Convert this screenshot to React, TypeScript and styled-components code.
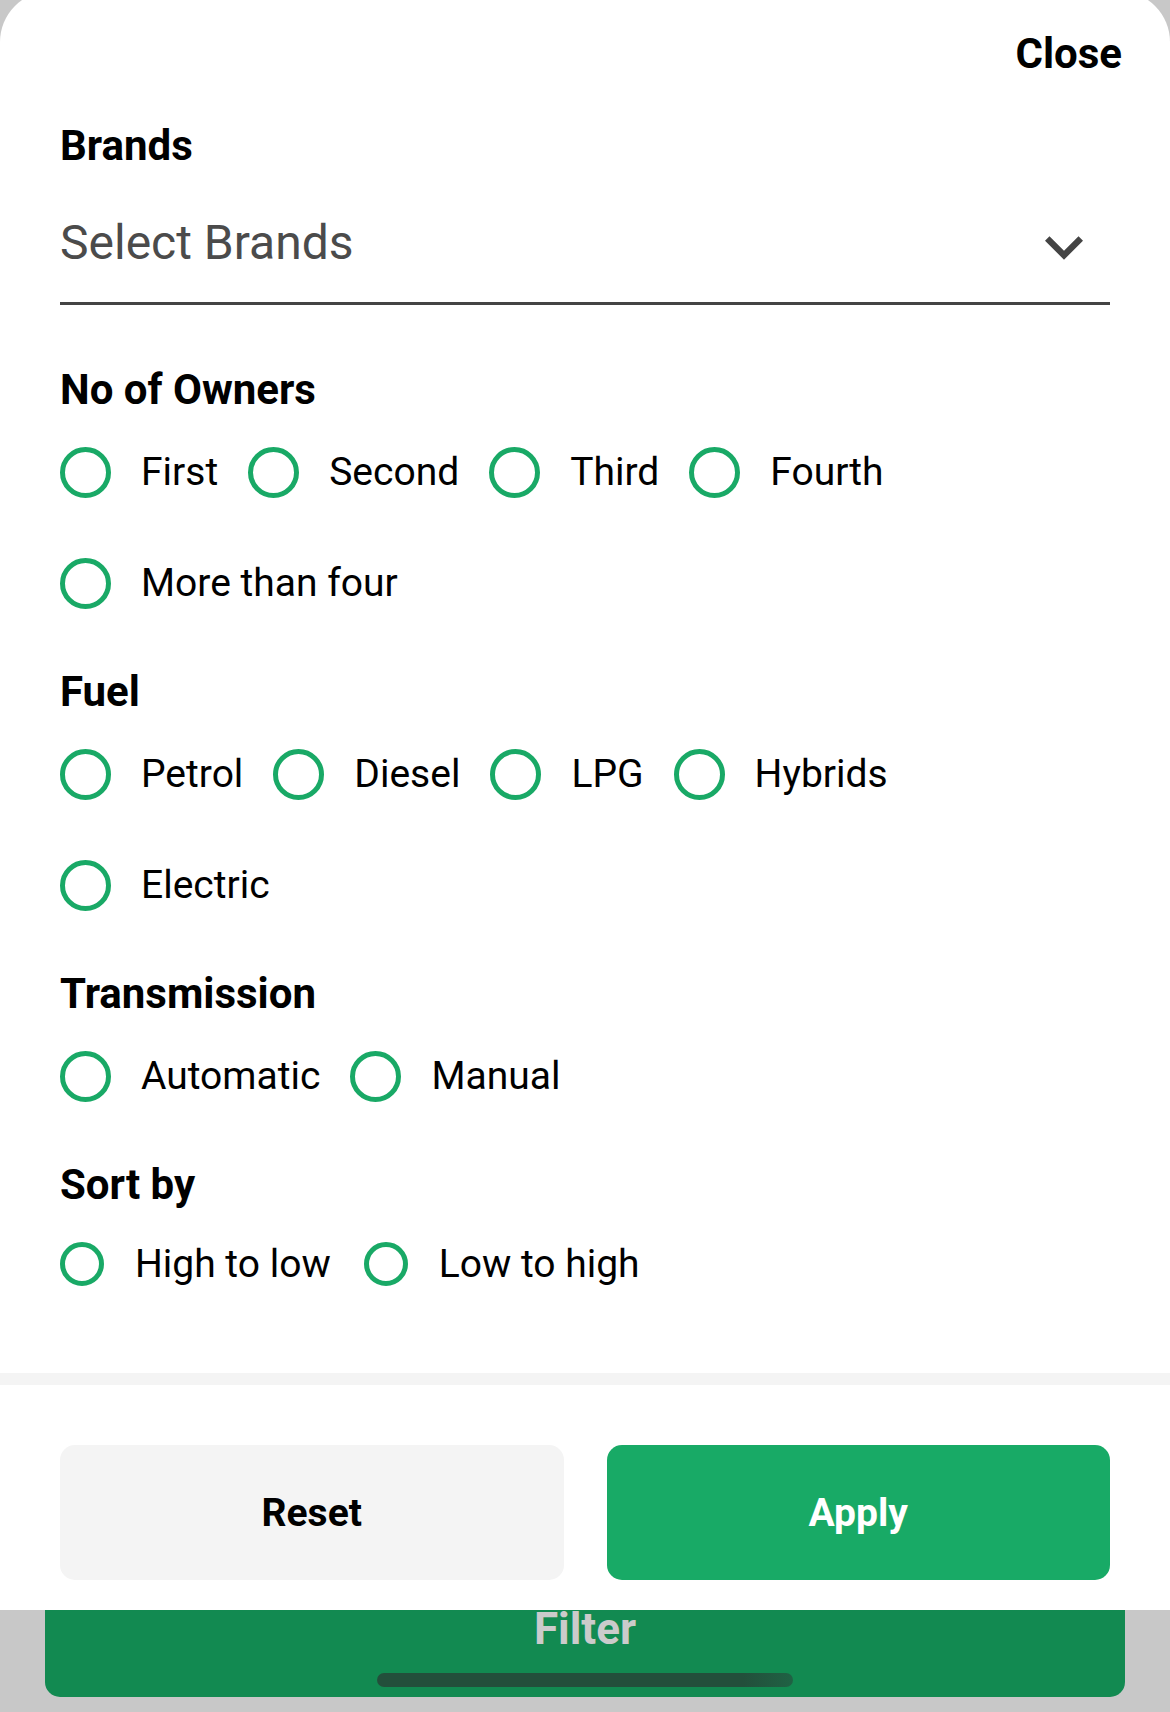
import styled, { createGlobalStyle } from "styled-components";

const GlobalStyle = createGlobalStyle`
  html, body {
    margin: 0;
    padding: 0;
    background: #c8c8c8;
    font-family: Roboto, "Noto Sans", "Liberation Sans", sans-serif;
    -webkit-font-smoothing: antialiased;
  }
  * { box-sizing: border-box; }
`;

const green = "#19a966";

const Screen = styled.div`
  width: 1170px;
  height: 1712px;
  overflow: hidden;
  display: flex;
  flex-direction: column;
  background: #c8c8c8;
`;

const Sheet = styled.div`
  margin-top: -9px;
  height: 1619px;
  flex-shrink: 0;
  background: #fff;
  border-radius: 51px 51px 0 0;
  display: flex;
  flex-direction: column;
`;

const Header = styled.div`
  display: flex;
  justify-content: flex-end;
  padding: 35px 48px 0 60px;
`;

const CloseButton = styled.button`
  border: none;
  background: none;
  padding: 0;
  font-family: inherit;
  font-weight: 700;
  font-size: 42px;
  line-height: 56px;
  color: #000;
`;

const Content = styled.div`
  flex: 1;
  padding: 36px 60px 0;
`;

const Section = styled.section<{ $gap?: number }>`
  margin-top: ${(p) => p.$gap ?? 42}px;
  &:first-child { margin-top: 0; }
`;

const Heading = styled.h2`
  margin: 0;
  font-size: 42px;
  font-weight: 700;
  line-height: 56px;
  color: #000;
`;

const SelectField = styled.div`
  margin-top: 37px;
  display: flex;
  align-items: center;
  justify-content: space-between;
  padding: 0 27px 27px 0;
  border-bottom: 3px solid #444;
`;

const Placeholder = styled.span`
  font-size: 48px;
  line-height: 64px;
  color: #4b4b4b;
`;

const Chevron = styled.svg`
  width: 38px;
  height: 24px;
  margin-top: 10px;
`;

const RadioGroup = styled.div<{ $gap?: number; $top?: number }>`
  margin-top: ${(p) => p.$top ?? 14}px;
  display: flex;
  flex-wrap: wrap;
  column-gap: ${(p) => p.$gap ?? 30}px;
  row-gap: 31px;
`;

const RadioItem = styled.label`
  display: flex;
  align-items: center;
  height: 80px;
  cursor: pointer;
`;

const Ring = styled.span<{ $size: number }>`
  width: ${(p) => p.$size}px;
  height: ${(p) => p.$size}px;
  border: 5px solid ${green};
  border-radius: 50%;
  flex-shrink: 0;
`;

const RadioText = styled.span<{ $gap: number }>`
  margin-left: ${(p) => p.$gap}px;
  font-size: 39px;
  color: #000;
  line-height: 48px;
`;

const Divider = styled.div`
  height: 12px;
  background: #f4f4f4;
`;

const Footer = styled.div`
  display: grid;
  grid-template-columns: 1fr 1fr;
  column-gap: 43px;
  padding: 60px 60px 30px;
`;

const ActionButton = styled.button<{ $primary?: boolean }>`
  height: 135px;
  border: none;
  border-radius: 15px;
  font-family: inherit;
  font-size: 39px;
  font-weight: 700;
  background: ${(p) => (p.$primary ? "#18aa66" : "#f4f4f4")};
  color: ${(p) => (p.$primary ? "#fff" : "#000")};
`;

const FilterBar = styled.div`
  margin: 0 45px;
  height: 87px;
  flex-shrink: 0;
  background: #128a51;
  border-radius: 0 0 15px 15px;
  display: flex;
  flex-direction: column;
  align-items: center;
`;

const FilterText = styled.span`
  font-size: 44px;
  font-weight: 700;
  line-height: 38px;
  color: #cbcbcb;
`;

const HomeHandle = styled.div`
  margin-top: 25px;
  width: 416px;
  height: 14px;
  border-radius: 7px;
  background: linear-gradient(90deg, #234f3b 0%, #234f3b 88%, #1f6244 100%);
`;

type RadioProps = { label: string; size?: number; textGap?: number };

const Radio = ({ label, size = 51, textGap = 30 }: RadioProps) => (
  <RadioItem>
    <Ring $size={size} />
    <RadioText $gap={textGap}>{label}</RadioText>
  </RadioItem>
);

const groups: { title: string; options: string[] }[] = [
  { title: "No of Owners", options: ["First", "Second", "Third", "Fourth", "More than four"] },
  { title: "Fuel", options: ["Petrol", "Diesel", "LPG", "Hybrids", "Electric"] },
  { title: "Transmission", options: ["Automatic", "Manual"] },
];

export default function App() {
  return (
    <>
      <GlobalStyle />
      <Screen>
        <Sheet>
          <Header>
            <CloseButton>Close</CloseButton>
          </Header>
          <Content>
            <Section>
              <Heading>Brands</Heading>
              <SelectField>
                <Placeholder>Select Brands</Placeholder>
                <Chevron viewBox="6 8.59 12 7.41">
                  <path d="M16.59 8.59L12 13.17 7.41 8.59 6 10l6 6 6-6z" fill="#444" />
                </Chevron>
              </SelectField>
            </Section>
            {groups.map((g, i) => (
              <Section key={g.title} $gap={i === 0 ? 57 : 41}>
                <Heading>{g.title}</Heading>
                <RadioGroup>
                  {g.options.map((o) => (
                    <Radio key={o} label={o} />
                  ))}
                </RadioGroup>
              </Section>
            ))}
            <Section $gap={41}>
              <Heading>Sort by</Heading>
              <RadioGroup $gap={33} $top={11}>
                <Radio label="High to low" size={44} textGap={31} />
                <Radio label="Low to high" size={44} textGap={31} />
              </RadioGroup>
            </Section>
          </Content>
          <Divider />
          <Footer>
            <ActionButton>Reset</ActionButton>
            <ActionButton $primary>Apply</ActionButton>
          </Footer>
        </Sheet>
        <FilterBar>
          <FilterText>Filter</FilterText>
          <HomeHandle />
        </FilterBar>
      </Screen>
    </>
  );
}
